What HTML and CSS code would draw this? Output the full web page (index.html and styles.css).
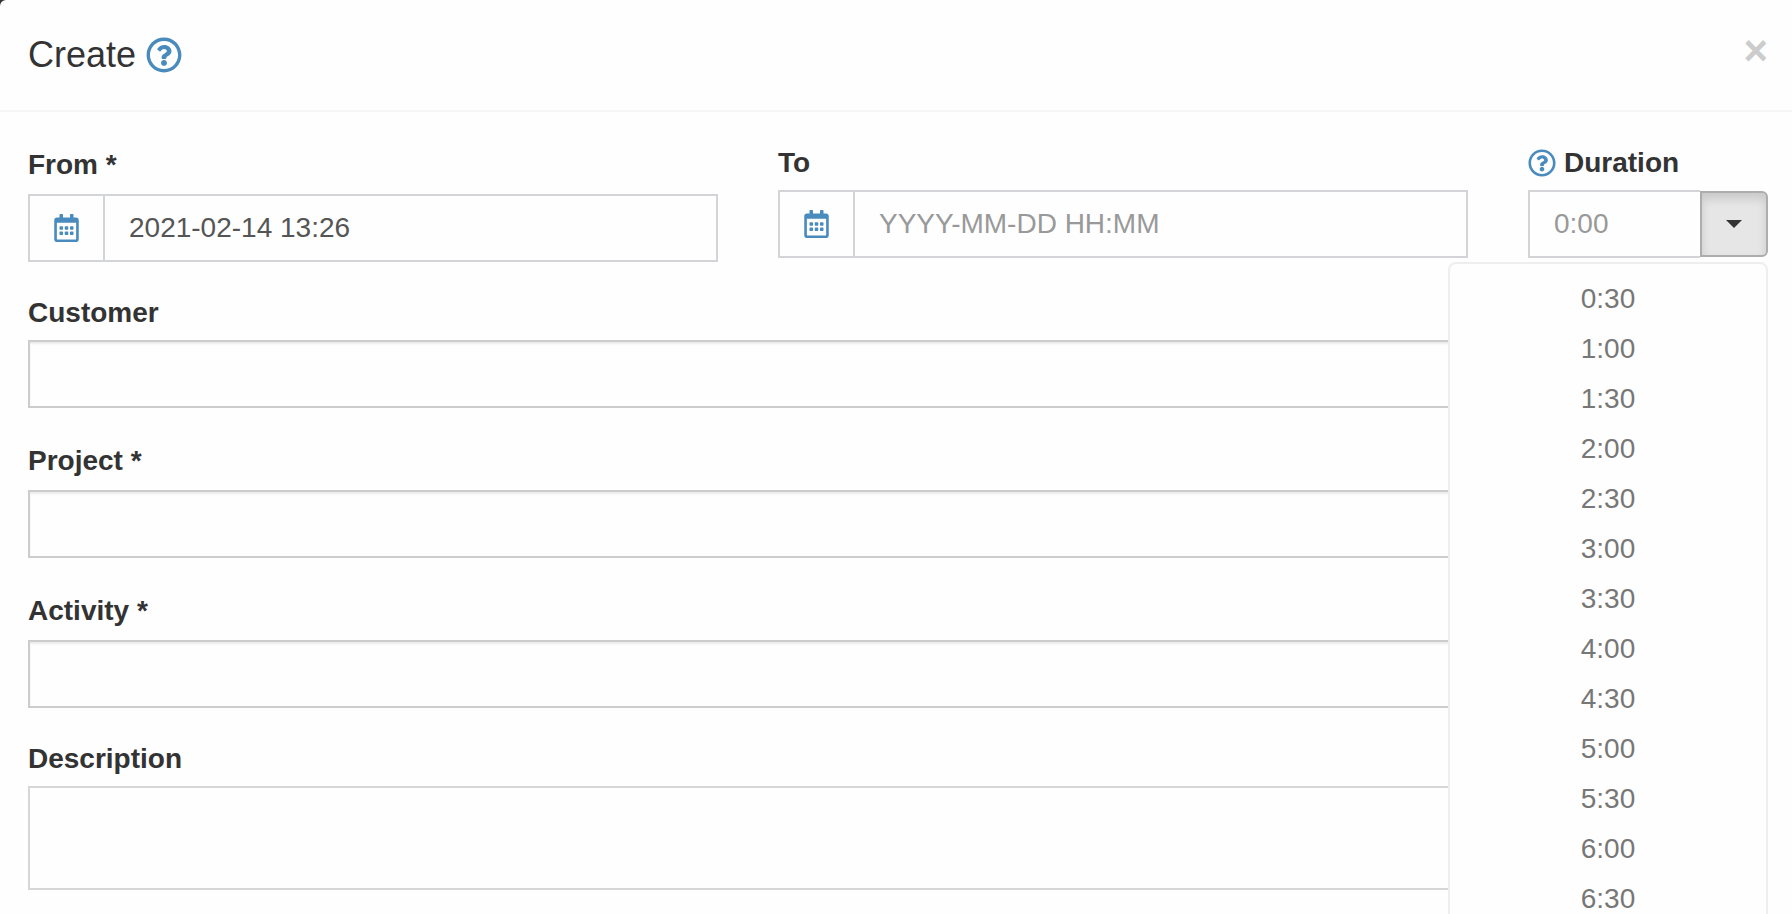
FILE: index.html
```
<!DOCTYPE html>
<html lang="en">
<head>
<meta charset="utf-8">
<title>Create</title>
<link rel="stylesheet" href="styles.css">
</head>
<body>
<svg class="sprite" aria-hidden="true">
  <symbol id="icon-help" viewBox="0 0 512 512"><path d="M256 8C119.043 8 8 119.083 8 256c0 136.997 111.043 248 248 248s248-111.003 248-248C504 119.083 392.957 8 256 8zm0 448c-110.532 0-200-89.431-200-200 0-110.495 89.472-200 200-200 110.491 0 200 89.471 200 200 0 110.53-89.431 200-200 200zm107.244-255.2c0 67.052-72.421 68.084-72.421 92.863V300c0 6.627-5.373 12-12 12h-45.647c-6.627 0-12-5.373-12-12v-8.659c0-35.745 27.1-50.034 47.579-61.516 17.561-9.845 28.324-16.541 28.324-29.579 0-17.246-21.999-28.693-39.784-28.693-23.189 0-33.894 10.977-48.942 29.969-4.057 5.12-11.46 6.071-16.666 2.124l-27.824-21.098c-5.107-3.872-6.251-11.066-2.644-16.363C184.846 131.491 214.94 112 261.794 112c49.071 0 101.45 38.304 101.45 88.8zM298 368c0 23.159-18.841 42-42 42s-42-18.841-42-42 18.841-42 42-42 42 18.841 42 42z"/></symbol>
  <symbol id="icon-calendar" viewBox="0 0 448 512"><path d="M148 288h-40c-6.6 0-12-5.4-12-12v-40c0-6.6 5.4-12 12-12h40c6.6 0 12 5.4 12 12v40c0 6.6-5.4 12-12 12zm108-12v-40c0-6.6-5.4-12-12-12h-40c-6.6 0-12 5.4-12 12v40c0 6.6 5.4 12 12 12h40c6.6 0 12-5.4 12-12zm96 0v-40c0-6.6-5.4-12-12-12h-40c-6.6 0-12 5.4-12 12v40c0 6.6 5.4 12 12 12h40c6.6 0 12-5.4 12-12zm-96 96v-40c0-6.6-5.4-12-12-12h-40c-6.6 0-12 5.4-12 12v40c0 6.6 5.4 12 12 12h40c6.6 0 12-5.4 12-12zm-96 0v-40c0-6.6-5.4-12-12-12h-40c-6.6 0-12 5.4-12 12v40c0 6.6 5.4 12 12 12h40c6.6 0 12-5.4 12-12zm192 0v-40c0-6.6-5.4-12-12-12h-40c-6.6 0-12 5.4-12 12v40c0 6.6 5.4 12 12 12h40c6.6 0 12-5.4 12-12zm96-260v352c0 26.5-21.5 48-48 48H48c-26.5 0-48-21.5-48-48V112c0-26.5 21.5-48 48-48h48V12c0-6.6 5.4-12 12-12h40c6.6 0 12 5.4 12 12v52h128V12c0-6.6 5.4-12 12-12h40c6.6 0 12 5.4 12 12v52h48c26.5 0 48 21.5 48 48zm-48 346V160H48v298c0 3.3 2.7 6 6 6h340c3.3 0 6-2.7 6-6z"/></symbol>
</svg>
<main class="modal">
  <header class="modal-header">
    <h1 class="modal-title">Create
      <a class="help" href="#" aria-label="Help"><svg class="icon icon-lg"><use href="#icon-help"/></svg></a>
    </h1>
    <button class="close" type="button" aria-label="Close">×</button>
  </header>
  <form class="modal-body">
    <div class="row">
      <div class="form-group col-5">
        <label class="label required" for="from">From *</label>
        <div class="input-group">
          <span class="addon"><svg class="icon icon-calendar"><use href="#icon-calendar"/></svg></span>
          <input class="control" id="from" type="text" value="2021-02-14 13:26">
        </div>
      </div>
      <div class="form-group col-5">
        <label class="label" for="to">To</label>
        <div class="input-group">
          <span class="addon"><svg class="icon icon-calendar"><use href="#icon-calendar"/></svg></span>
          <input class="control" id="to" type="text" placeholder="YYYY-MM-DD HH:MM">
        </div>
      </div>
      <div class="form-group col-2">
        <label class="label" for="duration"><svg class="icon"><use href="#icon-help"/></svg>Duration</label>
        <div class="input-group">
          <input class="control" id="duration" type="text" placeholder="0:00">
          <button class="toggle" type="button" aria-label="Choose a duration" aria-expanded="true"><span class="caret"></span></button>
          <ul class="menu">
            <li><a href="#">0:30</a></li>
            <li><a href="#">1:00</a></li>
            <li><a href="#">1:30</a></li>
            <li><a href="#">2:00</a></li>
            <li><a href="#">2:30</a></li>
            <li><a href="#">3:00</a></li>
            <li><a href="#">3:30</a></li>
            <li><a href="#">4:00</a></li>
            <li><a href="#">4:30</a></li>
            <li><a href="#">5:00</a></li>
            <li><a href="#">5:30</a></li>
            <li><a href="#">6:00</a></li>
            <li><a href="#">6:30</a></li>
          </ul>
        </div>
      </div>
    </div>
    <div class="form-group">
      <label class="label" for="customer">Customer</label>
      <select class="control select" id="customer"></select>
    </div>
    <div class="form-group">
      <label class="label required" for="project">Project *</label>
      <select class="control select" id="project"></select>
    </div>
    <div class="form-group">
      <label class="label required" for="activity">Activity *</label>
      <select class="control select" id="activity"></select>
    </div>
    <div class="form-group">
      <label class="label" for="description">Description</label>
      <textarea class="control textarea" id="description"></textarea>
    </div>
  </form>
</main>
</body>
</html>
```
FILE: styles.css
```
* {
  box-sizing: border-box;
}

body {
  margin: 0;
  overflow: hidden;
  background: #333;
  color: #333;
  font: 28px/40px "Liberation Sans", Arial, sans-serif;
}

.sprite {
  display: none;
}

.modal {
  min-height: 100vh;
  background: #fefefe;
  border-top-left-radius: 6px;
}

.modal-header {
  display: flex;
  justify-content: space-between;
  align-items: flex-start;
  padding: 30px 24px 30px 28px;
  border-bottom: 2px solid #f6f6f6;
}

.modal-title {
  display: flex;
  align-items: center;
  gap: 10px;
  margin: 0;
  font-size: 36px;
  font-weight: 400;
  line-height: 50px;
}

.help {
  display: flex;
}

.icon {
  width: 28px;
  height: 28px;
  fill: #4a8bbd;
}

.icon-lg {
  width: 36px;
  height: 36px;
}

.icon-calendar {
  width: 25px;
}

.close {
  padding: 0;
  border: 0;
  background: none;
  color: #ccc;
  font: 700 42px/42px "Liberation Sans", Arial, sans-serif;
}

.modal-body {
  display: flex;
  flex-direction: column;
  gap: 28px;
  padding: 28px 24px 24px 28px;
}

.row {
  display: grid;
  grid-template-columns: repeat(12, 1fr);
  column-gap: 60px;
}

.col-5 {
  grid-column: span 5;
}

.col-2 {
  grid-column: span 2;
}

.label {
  display: flex;
  align-items: center;
  gap: 8px;
  margin-bottom: 4px;
  font-weight: 700;
  line-height: 46px;
}

.required {
  line-height: 50px;
}

.input-group {
  position: relative;
  display: flex;
}

.addon {
  display: flex;
  flex: none;
  align-items: center;
  justify-content: center;
  width: 75px;
  border: 2px solid #d2d4d8;
  border-right: 0;
}

.control {
  display: block;
  flex: 1;
  width: 100%;
  min-width: 0;
  height: 68px;
  margin: 0;
  padding: 12px 24px;
  border: 2px solid #d2d4d8;
  border-radius: 0;
  outline: 0;
  background: #fefefe;
  color: #555;
  font: inherit;
}

.control::placeholder {
  color: #999;
  opacity: 1;
}

.select {
  appearance: none;
  border-color: #ccc;
  box-shadow: inset 0 2px 2px rgba(0, 0, 0, 0.075);
}

.textarea {
  height: 104px;
  resize: none;
  border-color: #d4d6d8;
}

#duration {
  border-right: 0;
}

.toggle {
  display: flex;
  flex: none;
  align-items: center;
  justify-content: center;
  width: 68px;
  margin: 1px 0;
  padding: 0;
  border: 2px solid #adadad;
  border-radius: 0 6px 6px 0;
  background: #e6e6e6;
  box-shadow: inset 0 6px 10px rgba(0, 0, 0, 0.125);
}

.caret {
  border-top: 8px solid #333;
  border-right: 8px solid transparent;
  border-left: 8px solid transparent;
}

.menu {
  position: absolute;
  top: 100%;
  right: 0;
  z-index: 10;
  width: 320px;
  margin: 4px 0 0;
  padding: 10px 0;
  border: 2px solid #eee;
  border-radius: 8px;
  background: #fefefe;
  list-style: none;
  text-align: center;
}

.menu a {
  display: block;
  color: #777;
  line-height: 50px;
  text-decoration: none;
}
```
